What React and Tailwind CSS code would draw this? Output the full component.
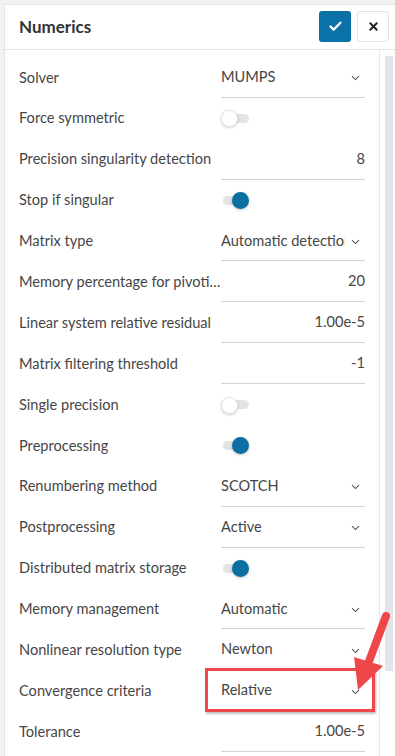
import { Check, X } from 'lucide-react'

const rows = [
    { label: 'Solver', type: 'select', value: 'MUMPS' },
    { label: 'Force symmetric', type: 'toggle', on: false },
    { label: 'Precision singularity detection', type: 'input', value: '8' },
    { label: 'Stop if singular', type: 'toggle', on: true },
    { label: 'Matrix type', type: 'select', value: 'Automatic detection' },
    { label: 'Memory percentage for pivoting', type: 'input', value: '20' },
    { label: 'Linear system relative residual', type: 'input', value: '1.00e-5' },
    { label: 'Matrix filtering threshold', type: 'input', value: '-1' },
    { label: 'Single precision', type: 'toggle', on: false },
    { label: 'Preprocessing', type: 'toggle', on: true },
    { label: 'Renumbering method', type: 'select', value: 'SCOTCH' },
    { label: 'Postprocessing', type: 'select', value: 'Active' },
    { label: 'Distributed matrix storage', type: 'toggle', on: true },
    { label: 'Memory management', type: 'select', value: 'Automatic' },
    { label: 'Nonlinear resolution type', type: 'select', value: 'Newton' },
    { label: 'Convergence criteria', type: 'select', value: 'Relative' },
    { label: 'Tolerance', type: 'input', value: '1.00e-5' },
]

function Chevron() {
    return (
        <svg width="9" height="6" viewBox="0 0 9 6" className="shrink-0 mt-[3px]">
            <path d="M1 1.2 L4.5 4.6 L8 1.2" fill="none" stroke="#555" strokeWidth="1.1" />
        </svg>
    )
}

function Toggle({ on }) {
    return (
        <div className="relative w-[28px] h-[18px] flex items-center">
            <div className="w-[26px] h-[9px] rounded-full bg-[#e4e4e4] ml-[2px]" />
            {on ? (
                <div className="absolute right-0 top-[1px] w-[17px] h-[17px] rounded-full bg-[#0b6fa4] shadow-[0_1px_3px_rgba(0,0,0,0.25)]" />
            ) : (
                <div className="absolute left-0 top-[1px] w-[17px] h-[17px] rounded-full bg-white border border-[#e6e6e6] shadow-[0_1px_3px_rgba(0,0,0,0.2)]" />
            )}
        </div>
    )
}

function Row({ row }) {
    return (
        <div className="flex h-[40.9px] items-stretch">
            <div className="w-[202px] shrink-0 flex items-center overflow-hidden">
                <span className="truncate">{row.label}</span>
            </div>
            {row.type === 'toggle' ? (
                <div className="flex items-center">
                    <Toggle on={row.on} />
                </div>
            ) : (
                <div className="w-[144px] shrink-0 flex items-center border-b border-[#d4d4d4]">
                    {row.type === 'select' ? (
                        <>
                            <span className="w-[124px] overflow-hidden whitespace-nowrap">{row.value}</span>
                            <div className="flex-1" />
                            <div className="mr-[5px]"><Chevron /></div>
                        </>
                    ) : (
                        <span className="flex-1 text-right">{row.value}</span>
                    )}
                </div>
            )}
        </div>
    )
}

export default function App() {
    return (
        <div className="relative w-[395px] h-[756px] overflow-hidden bg-[#f2f2f2] pt-[4px] pl-[4px] font-['Lato','Liberation_Sans',sans-serif] text-[14.6px] text-[#464646]">
            <div className="h-full bg-white border-l border-t border-[#e2e2e2] flex flex-col">
                {/* Header */}
                <div className="h-[45px] shrink-0 flex items-center justify-between pl-[14px] pr-[6px] border-b border-[#e3e3e3]">
                    <h1 className="text-[17px] font-bold text-[#333] mt-[-1px]">Numerics</h1>
                    <div className="flex items-center gap-[6px] mt-[-2px]">
                        <button className="w-[32px] h-[31px] rounded-[3px] bg-[#0b72a8] flex items-center justify-center">
                            <Check size={15} strokeWidth={3.5} className="text-white" />
                        </button>
                        <button className="w-[32px] h-[31px] rounded-[3px] bg-white border border-[#e2e2e2] flex items-center justify-center">
                            <X size={13} strokeWidth={3.5} className="text-[#222]" />
                        </button>
                    </div>
                </div>

                {/* Body */}
                <div className="flex flex-1 min-h-0">
                    <div className="w-[375px] shrink-0 border-r border-[#e6e6e6] pl-[14px] pt-[7px]">
                        {rows.map((row) => (
                            <Row key={row.label} row={row} />
                        ))}
                    </div>
                    <div className="flex-1 pl-[5px] pt-[6px]">
                        <div className="w-[8px] h-[615px] bg-[#e3e5e8]" />
                    </div>
                </div>
            </div>

            {/* Annotation */}
            <div className="absolute left-[205px] top-[668px] w-[170px] h-[44px] border-[3px] border-[#f0474b] shadow-[1px_2px_2px_rgba(0,0,0,0.25)]" />
            <svg className="absolute left-0 top-0" width="395" height="756" viewBox="0 0 395 756">
                <line x1="386" y1="616" x2="368" y2="664" stroke="#f0474b" strokeWidth="8" strokeLinecap="round" />
                <polygon points="354,657 383,666 358,690" fill="#f0474b" />
            </svg>
        </div>
    )
}
